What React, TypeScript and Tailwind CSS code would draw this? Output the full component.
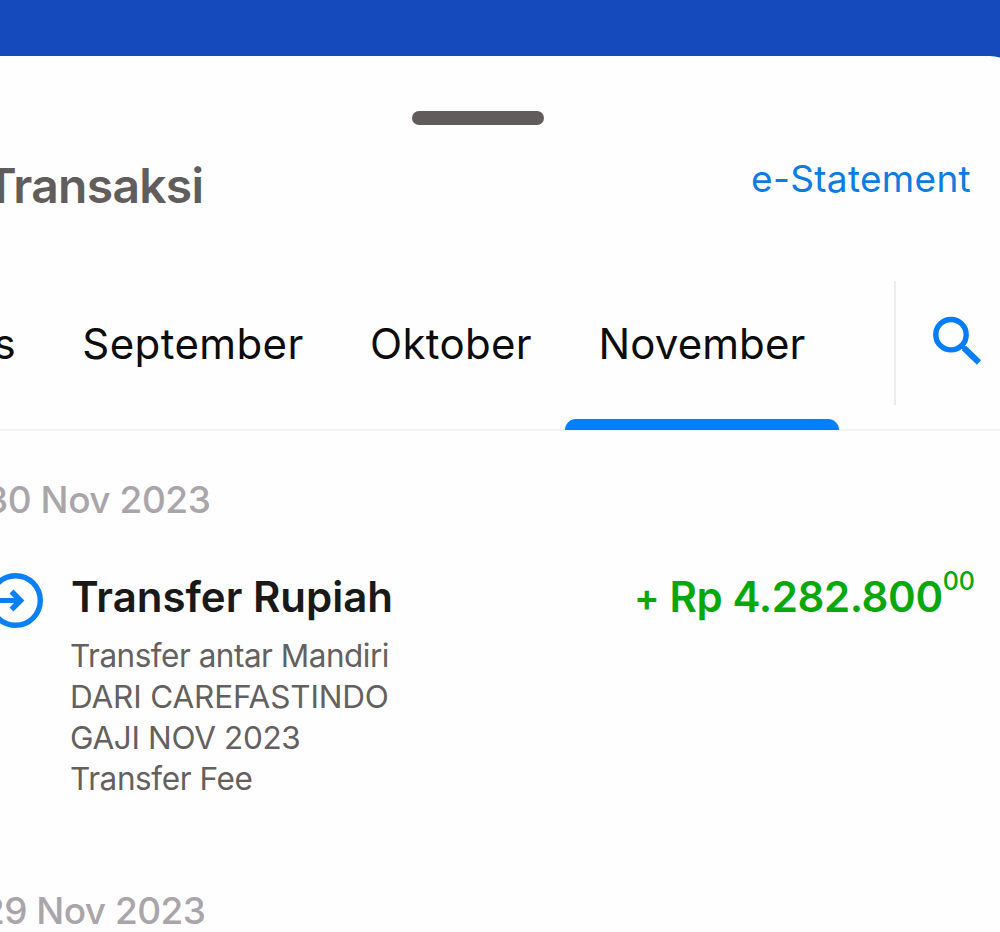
import { clsx } from "clsx"

interface Tab {
  label: string
  active?: boolean
  className: string
}

interface Detail {
  text: string
  className?: string
}

interface Transaction {
  title: string
  details: Detail[]
  amount: string
  cents: string
}

const tabs: Tab[] = [
  { label: "Agustus", className: "w-[220px] pr-[9px]" },
  { label: "September", className: "w-[288px] tracking-[0.4px]" },
  { label: "Oktober", className: "w-[228px] tracking-[0.3px]" },
  { label: "November", active: true, className: "w-[274px] tracking-[0.1px]" },
]

const transaction: Transaction = {
  title: "Transfer Rupiah",
  details: [
    { text: "Transfer antar Mandiri", className: "tracking-[-0.5px]" },
    { text: "DARI CAREFASTINDO", className: "tracking-[-0.15px]" },
    { text: "GAJI NOV 2023", className: "tracking-[-0.35px]" },
    { text: "Transfer Fee", className: "tracking-[-0.4px]" },
  ],
  amount: "Rp 4.282.800",
  cents: "00",
}

function SearchIcon() {
  return (
    <svg width="50" height="50" viewBox="0 0 50 50" fill="none" stroke="#047dfa">
      <circle cx="19" cy="18.7" r="15.2" strokeWidth="5.4" />
      <path d="M30.5 30.5L33 33" strokeWidth="4" />
      <path d="M32 32L47 46.5" strokeWidth="6" />
    </svg>
  )
}

function TransferIcon() {
  return (
    <svg width="56" height="56" viewBox="0 0 56 56" fill="none" stroke="#0a80f5" className="shrink-0">
      <circle cx="27.5" cy="27.5" r="24.8" strokeWidth="5.4" />
      <path d="M9 27.5H33" strokeWidth="5" />
      <path d="M23.5 18.5L32.5 27.5L23.5 36.5" strokeWidth="5.5" />
    </svg>
  )
}

function TabBar() {
  return (
    <nav className="flex h-[152px] justify-between border-b-2 border-[#f3f3f3]">
      <div className="-ml-[171px] flex shrink-0">
        {tabs.map((t) => (
          <button
            key={t.label}
            className={clsx("flex shrink-0 flex-col items-center text-[42px] leading-[50px] text-[#0c0c0c]", t.className)}
          >
            <span className="mt-[40px]">{t.label}</span>
            {t.active && <span className="mt-[50px] h-[11px] w-full shrink-0 rounded-t-[11px] bg-[#007fff]" />}
          </button>
        ))}
      </div>
      <div className="flex w-[106px] shrink-0">
        <div className="mt-[2px] h-[124px] w-[2px] bg-[#ececec]" />
        <button className="ml-[36px] mt-[37px] h-[50px]">
          <SearchIcon />
        </button>
      </div>
    </nav>
  )
}

function TransactionRow({ title, details, amount, cents }: Transaction) {
  return (
    <div className="flex">
      <div className="-ml-[12px] mt-[2px]">
        <TransferIcon />
      </div>
      <div className="ml-[27px] grow">
        <h3 className="text-[42px] font-semibold leading-[52px] text-[#191919]">{title}</h3>
        <div className="-ml-px mt-[12px] text-[31.5px] leading-[41px] text-[#646060]">
          {details.map((d) => (
            <p key={d.text} className={d.className}>{d.text}</p>
          ))}
        </div>
      </div>
      <div className="mr-[25px] flex h-[52px] text-[42px] font-semibold leading-[52px] text-[#06a80c]">
        <span className="mr-[10px] text-[38px]">+</span>
        <span className="tracking-[-0.4px]">{amount}</span>
        <span className="-mt-[16px] text-[25px] font-medium">{cents}</span>
      </div>
    </div>
  )
}

export default function App() {
  return (
    <div className="h-[932px] w-full overflow-hidden bg-[#144abb] pt-[56px] font-['Inter','Liberation_Sans',sans-serif]">
      <div className="-mr-[22px] h-[876px] overflow-hidden rounded-tr-[32px] bg-[#fefefe] pr-[22px]">
        <div className="ml-[412px] mt-[55px] h-[14px] w-[132px] rounded-full bg-[#625b5b]" />

        <header className="mt-[36px] flex h-[118px] justify-between">
          <h1 className="-ml-[15px] text-[48px] font-semibold leading-[50px] tracking-[-0.7px] text-[#625d5d]">Transaksi</h1>
          <a className="mr-[29px] text-[37px] leading-[36px] tracking-[0.3px] text-[#0d7be0]">e-Statement</a>
        </header>

        <TabBar />

        <section>
          <h2 className="-ml-[15px] mt-[49px] text-[37px] font-medium leading-[40px] tracking-[-0.45px] text-[#aaa5aa]">30 Nov 2023</h2>
          <div className="mt-[51px]">
            <TransactionRow {...transaction} />
          </div>
        </section>

        <section>
          <h2 className="-ml-[18px] mt-[92px] text-[37px] font-medium leading-[40px] tracking-[-0.55px] text-[#aaa5aa]">29 Nov 2023</h2>
        </section>
      </div>
    </div>
  )
}
